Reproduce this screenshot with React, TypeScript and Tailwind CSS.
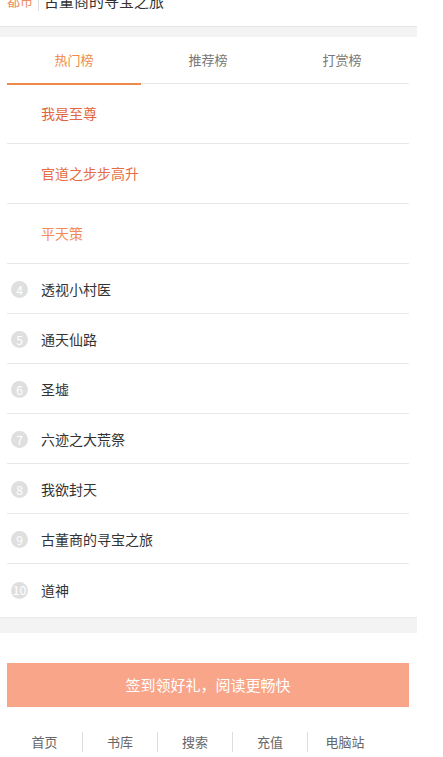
const TABS = ['热门榜', '推荐榜', '打赏榜']

const TOP_BOOKS = [
  { name: '我是至尊', color: 'text-[#e2673f]' },
  { name: '官道之步步高升', color: 'text-[#e56d44]' },
  { name: '平天策', color: 'text-[#f48a5a]' },
]

const BOOKS = ['透视小村医', '通天仙路', '圣墟', '六迹之大荒祭', '我欲封天', '古董商的寻宝之旅', '道神']

const FOOTER_LINKS = ['首页', '书库', '搜索', '充值', '电脑站']

export default function App() {
  return (
    <div className="w-[443px] min-h-[757px] bg-white font-['Noto_Sans_CJK_SC','Noto_Sans',sans-serif] overflow-hidden">
      <div className="w-[417px]">
        {/* 顶部标题 (已滚动出视图) */}
        <div className="h-[26px] overflow-hidden">
          <div className="flex items-center -mt-[10px] pl-[7px] leading-[22px]">
            <span className="text-[13px] text-[#e98c63]">都市</span>
            <span className="mx-[5px] h-[20px] w-px bg-[#dddddd]" />
            <span className="text-[15px] text-[#333333]">古董商的寻宝之旅</span>
          </div>
        </div>

        <div className="h-[11px] border-t border-[#e6e6e6] bg-[#f3f3f3]" />

        {/* 排行榜 */}
        <div className="pl-[7px] pr-[8px]">
          <div className="flex h-[47px] border-b border-[#e8e8e8]">
            {TABS.map((tab, i) => (
              <div
                key={tab}
                className={`relative flex flex-1 items-center justify-center text-[13px] ${i === 0 ? 'text-[#f08a4b]' : 'text-[#777777]'}`}
              >
                {tab}
                {i === 0 && <span className="absolute left-0 right-0 -bottom-[2px] h-[2px] bg-[#f0894a]" />}
              </div>
            ))}
          </div>

          <ul className="pb-[3px]">
            {TOP_BOOKS.map((book) => (
              <li
                key={book.name}
                className={`flex h-[60px] items-center border-b border-[#e8e8e8] pl-[34px] text-[14px] ${book.color}`}
              >
                {book.name}
              </li>
            ))}
            {BOOKS.map((name, i) => (
              <li
                key={name}
                className={`flex h-[50px] items-center pt-[2px] text-[14px] text-[#333333] ${i < BOOKS.length - 1 ? 'border-b border-[#e8e8e8]' : ''}`}
              >
                <span className="ml-[4px] flex h-[17px] w-[17px] items-center justify-center rounded-full bg-[#dfdfdf] text-[12px] leading-none text-white">
                  {i + 4}
                </span>
                <span className="ml-[13px]">{name}</span>
              </li>
            ))}
          </ul>
        </div>

        <div className="h-[16px] border-t border-[#e8e8e8] bg-[#f3f3f3]" />

        {/* 签到按钮 */}
        <div className="mt-[30px] pl-[7px] pr-[8px]">
          <button
            type="button"
            className="flex h-[44px] w-full items-center justify-center bg-[#f9a58a] text-[15px] text-white"
          >
            签到领好礼，阅读更畅快
          </button>
        </div>

        {/* 底部链接 */}
        <div className="mt-[20px] flex h-[30px] pl-[7px]">
          {FOOTER_LINKS.map((link, i) => (
            <div key={link} className="flex w-[75px] items-center">
              {i > 0 && <span className="h-[20px] w-px bg-[#dddddd]" />}
              <span className="flex-1 text-center text-[13px] text-[#666666]">{link}</span>
            </div>
          ))}
        </div>
      </div>
    </div>
  )
}
